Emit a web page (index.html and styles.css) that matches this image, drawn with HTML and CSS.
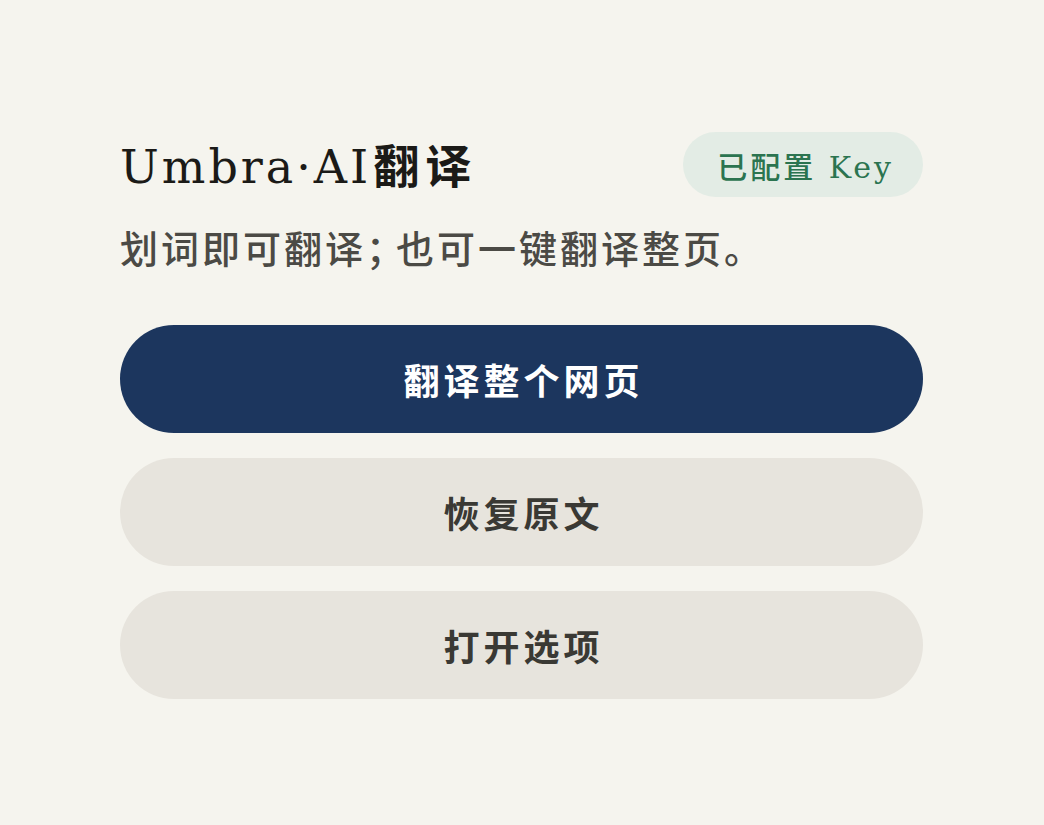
FILE: index.html
```html
<!DOCTYPE html>
<html lang="zh-CN">
<head>
<meta charset="utf-8">
<title>Umbra·AI翻译</title>
<link rel="stylesheet" href="styles.css">
</head>
<body>
<main class="popup">
  <header class="header">
    <h1 class="title">Umbra·AI<span class="title-cjk">翻译</span></h1>
    <span class="badge">已配置 Key</span>
  </header>
  <p class="subtitle">划词即可翻译<span class="semi">；</span>也可一键翻译整页。</p>
  <div class="actions">
    <button class="btn btn-primary" type="button">翻译整个网页</button>
    <button class="btn btn-secondary" type="button">恢复原文</button>
    <button class="btn btn-secondary" type="button">打开选项</button>
  </div>
</main>
</body>
</html>
```
FILE: styles.css
```css
html, body {
  margin: 0;
  padding: 0;
  background: #f5f4ee;
}
body {
  font-family: "DejaVu Serif", "Noto Sans CJK SC", serif;
}
.popup {
  padding: 132px 121px 0 120px;
  display: flex;
  flex-direction: column;
}
.header {
  display: flex;
  justify-content: space-between;
  align-items: center;
  height: 65px;
}
.title {
  margin: 0;
  font-size: 46px;
  font-weight: 400;
  letter-spacing: 3px;
  color: #1b1a17;
  line-height: 1;
}
.title-cjk {
  font-family: "Noto Sans CJK SC", sans-serif;
  font-weight: 700;
  letter-spacing: 6px;
  margin-left: 2px;
}
.badge {
  height: 65px;
  box-sizing: border-box;
  padding: 0 29px 0 34px;
  display: flex;
  align-items: center;
  border-radius: 33px;
  background: #e3ece5;
  color: #2b7450;
  font-size: 30px;
  letter-spacing: 3px;
  font-weight: 500;
}
.subtitle {
  margin: 27px 0 0;
  font-size: 38px;
  line-height: 53px;
  letter-spacing: 3px;
  color: #4b4a45;
  font-weight: 500;
}
.semi {
  letter-spacing: -8px;
}
.actions {
  margin-top: 48px;
  display: flex;
  flex-direction: column;
  gap: 25px;
}
.btn {
  height: 108px;
  border: none;
  border-radius: 54px;
  font-family: "Noto Sans CJK SC", sans-serif;
  font-size: 36px;
  font-weight: 600;
  letter-spacing: 4px;
  padding: 0 0 0 4px;
  cursor: pointer;
}
.btn-primary {
  background: #1c365e;
  color: #ffffff;
}
.btn-secondary {
  background: #e7e4dd;
  color: #3a3934;
}
```
